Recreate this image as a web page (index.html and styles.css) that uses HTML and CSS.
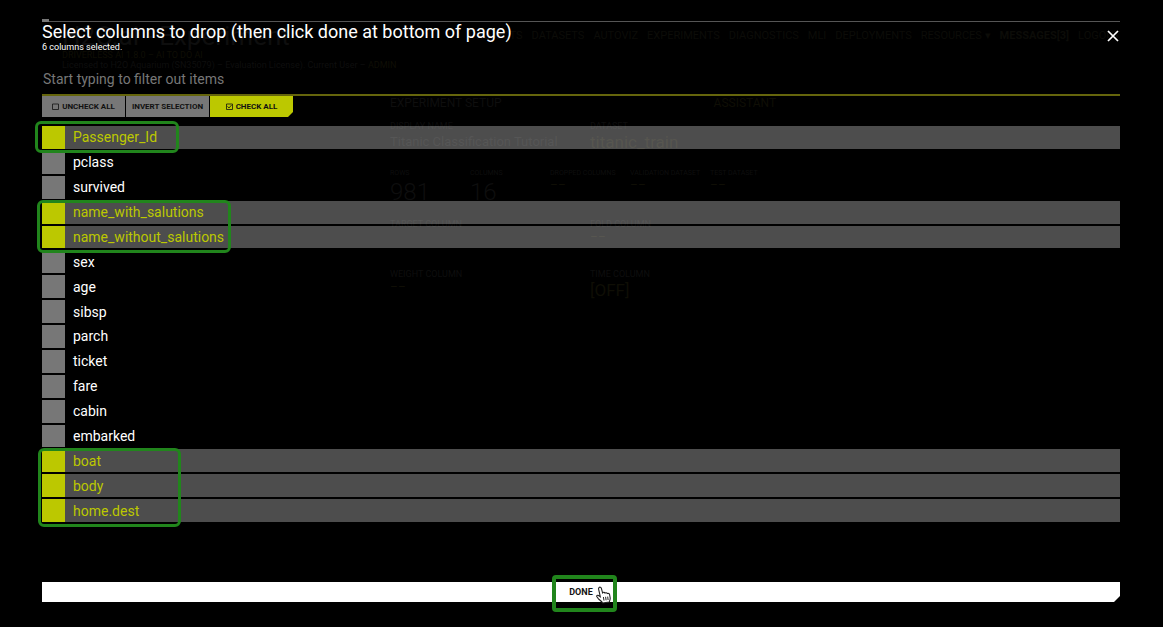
FILE: index.html
```html
<!DOCTYPE html>
<html lang="en">
<head>
<meta charset="utf-8">
<title>Select columns to drop</title>
<link rel="stylesheet" href="styles.css">
</head>
<body>
<div class="page" aria-hidden="true">
  <header class="top">
    <div class="brand">
      <div class="brand-name">H2O.ai - Experiment</div>
      <div class="accent small">DRIVERLESS AI 1.8.0 – AI TO DO AI</div>
      <div class="small">Licensed to H2O Aquarium (SN35079) – Evaluation License). Current User – <span class="accent">ADMIN</span></div>
    </div>
    <nav class="nav">
      <span>PROJECTS</span><span>DATASETS</span><span>AUTOVIZ</span><span>EXPERIMENTS</span><span>DIAGNOSTICS</span><span>MLI</span><span>DEPLOYMENTS</span><span>RESOURCES ▾</span><b>MESSAGES[3]</b><span>LOGOUT</span>
    </nav>
  </header>
  <section class="setup">
    <div class="setup-head"><span>EXPERIMENT SETUP</span><span class="accent">ASSISTANT</span></div>
    <div class="pair names">
      <div><div class="cap">DISPLAY NAME</div><div class="value">Titanic Classification Tutorial</div></div>
      <div><div class="cap">DATASET</div><div class="value wide accent">titanic_train</div></div>
    </div>
    <div class="stats">
      <div><div class="tiny">ROWS</div><div class="big">981</div></div>
      <div><div class="tiny">COLUMNS</div><div class="big">16</div></div>
      <div><div class="tiny">DROPPED COLUMNS</div><div class="accent">––</div></div>
      <div><div class="tiny">VALIDATION DATASET</div><div class="accent">––</div></div>
      <div><div class="tiny">TEST DATASET</div><div class="accent">––</div></div>
    </div>
    <div class="pair target">
      <div class="cap">TARGET COLUMN</div>
      <div><div class="cap">FOLD COLUMN</div><div class="accent">––</div></div>
    </div>
    <div class="pair">
      <div><div class="cap">WEIGHT COLUMN</div><div class="accent">––</div></div>
      <div><div class="cap">TIME COLUMN</div><div class="value wide accent">[OFF]</div></div>
    </div>
  </section>
</div>

<main class="dialog" role="dialog" aria-labelledby="dialog-title">
  <header class="head">
    <h1 class="title" id="dialog-title">Select columns to drop (then click done at bottom of page)</h1>
    <p class="count">6 columns selected.</p>
    <button class="close" type="button" aria-label="Close">
      <svg viewBox="0 0 12 12" width="12" height="12"><path d="M1 1L11 11M11 1L1 11" stroke="currentColor" stroke-width="1.7" fill="none"/></svg>
    </button>
  </header>
  <input class="filter" type="text" placeholder="Start typing to filter out items" aria-label="Filter items">
  <div class="tools">
    <button class="tool" type="button"><svg viewBox="0 0 7 7" width="7" height="7"><path d="M.5 1H6.5V6.5H.5Z" fill="none" stroke="currentColor" stroke-width=".8"/></svg>UNCHECK ALL</button>
    <button class="tool" type="button">INVERT SELECTION</button>
    <button class="tool tool-main" type="button"><svg viewBox="0 0 7 7" width="7" height="7"><path d="M.5 1H6.5V6.5H.5ZM1.5 3.4L3 5L5.6 2" fill="none" stroke="currentColor" stroke-width=".8"/></svg>CHECK ALL</button>
  </div>
  <div class="list">
    <label class="row"><input type="checkbox" checked><span>Passenger_Id</span></label>
    <label class="row"><input type="checkbox"><span>pclass</span></label>
    <label class="row"><input type="checkbox"><span>survived</span></label>
    <label class="row"><input type="checkbox" checked><span>name_with_salutions</span></label>
    <label class="row"><input type="checkbox" checked><span>name_without_salutions</span></label>
    <label class="row"><input type="checkbox"><span>sex</span></label>
    <label class="row"><input type="checkbox"><span>age</span></label>
    <label class="row"><input type="checkbox"><span>sibsp</span></label>
    <label class="row"><input type="checkbox"><span>parch</span></label>
    <label class="row"><input type="checkbox"><span>ticket</span></label>
    <label class="row"><input type="checkbox"><span>fare</span></label>
    <label class="row"><input type="checkbox"><span>cabin</span></label>
    <label class="row"><input type="checkbox"><span>embarked</span></label>
    <label class="row"><input type="checkbox" checked><span>boat</span></label>
    <label class="row"><input type="checkbox" checked><span>body</span></label>
    <label class="row"><input type="checkbox" checked><span>home.dest</span></label>
    <div class="mark mark-id"></div>
    <div class="mark mark-names"></div>
    <div class="mark mark-last"></div>
  </div>
  <div class="foot">
    <button class="done" type="button">DONE</button>
    <div class="mark mark-done">
      <svg class="hand" viewBox="0 0 16 18" width="16" height="18"><path d="M3 1.6C3.8.8 5 1.2 5.3 2.2L6.6 6.8C7.3 6 8.6 6.2 9 7.1C9.8 6.4 11 6.8 11.3 7.6C12.3 7.1 13.4 7.7 13.6 8.7L14.2 12C14.4 13.4 13.6 14.6 13.3 16L6.6 17C5.8 15.4 3.8 14.2 2.5 12.8L.9 10.8C.3 9.8 1.5 8.9 2.5 9.5L4.3 10.7L2.6 3.2C2.5 2.6 2.6 2 3 1.6Z" fill="#fff" stroke="#222" stroke-width="1.1"/><path d="M7.4 11L8 14.6M9.6 10.8L10.1 14.3M11.7 10.6L12.1 14" stroke="#222" fill="none"/></svg>
    </div>
  </div>
</main>
</body>
</html>
```
FILE: styles.css
```css
* { box-sizing: border-box; }
body {
  margin: 0;
  background: #000;
  color: #fff;
  font-family: Roboto, "Liberation Sans", sans-serif;
}
button { border: 0; padding: 0; font: inherit; cursor: pointer; }

/* Page dimmed behind the dialog */
.page {
  position: absolute;
  inset: 0;
  overflow: hidden;
  padding: 22px 43px 0 62px;
  color: #0e0e0e;
  white-space: nowrap;
}
.accent { color: #0f0e05; }
.top { display: flex; justify-content: space-between; height: 70px; }
.brand { width: 400px; }
.brand-name { font-size: 26px; line-height: 28px; }
.small { font-size: 9px; line-height: 10px; }
.nav { display: flex; gap: 9px; font-size: 11px; line-height: 28px; color: #0c0c08; }
.setup { padding-left: 328px; font-size: 12px; }
.setup-head { display: flex; gap: 212px; line-height: 22px; }
.pair { display: grid; grid-template-columns: 200px 1fr; height: 45px; }
.cap { font-size: 9px; line-height: 12px; }
.value { font-size: 13px; line-height: 20px; }
.wide { font-size: 17px; }
.names { padding-top: 6px; height: 54px; }
.stats { display: grid; grid-template-columns: repeat(5, 80px); height: 50px; }
.tiny { font-size: 7px; line-height: 10px; }
.big { font-size: 24px; line-height: 28px; font-weight: 300; }
.target { height: 50px; }

/* Dialog */
.dialog {
  position: relative;
  display: flex;
  flex-direction: column;
  min-height: 100vh;
  padding: 21px 43px 25px 42px;
}
.head { position: relative; border-top: 1px solid #555; }
.head::before {
  content: "";
  position: absolute;
  left: 0;
  top: -3px;
  width: 7px;
  height: 3px;
  background: #777;
}
.title { margin: 0; font-size: 18px; line-height: 20px; font-weight: 400; }
.count { margin: 0; font-size: 9px; line-height: 10px; }
.close {
  position: absolute;
  right: 0;
  top: 7px;
  width: 13px;
  height: 13px;
  color: #fff;
  background: none;
}
.close svg { display: block; }
.filter {
  height: 32px;
  margin-top: 12px;
  padding: 0 1px;
  border: 0;
  border-bottom: 2px solid #65650c;
  background: none;
  color: #fff;
  font: 14px Roboto, sans-serif;
  outline: 0;
}
.filter::placeholder { color: #777; opacity: 1; }
.tools { display: flex; gap: 1px; }
.tool {
  display: flex;
  align-items: center;
  justify-content: center;
  gap: 3px;
  width: 83px;
  height: 21px;
  background: #777;
  color: #111;
  font-size: 8px;
  font-weight: 700;
  white-space: nowrap;
}
.tool-main {
  background: #bcc800;
  clip-path: polygon(0 0, 100% 0, 100% calc(100% - 5px), calc(100% - 5px) 100%, 0 100%);
}
.list {
  position: relative;
  flex: 1;
  display: grid;
  grid-auto-rows: 1fr;
  gap: 2px;
  margin: 9px 0 60px;
}
.row {
  display: flex;
  align-items: center;
  gap: 8px;
  font-size: 14px;
  line-height: 20px;
}
.row:has(:checked) { background: rgba(255, 255, 255, 0.3); color: #bcc800; }
.row input {
  appearance: none;
  align-self: stretch;
  width: 23px;
  margin: 0;
  background: #777;
}
.row input:checked { background: #bcc800; }

/* Highlight frames */
.mark {
  position: absolute;
  border: 3px solid #21851c;
  border-radius: 6px;
  pointer-events: none;
}
.mark-id { left: -7px; top: -5px; width: 144px; height: 32px; }
.mark-names { left: -5px; top: 74px; width: 194px; height: 53px; }
.mark-last { left: -4px; bottom: -5px; width: 143px; height: 79px; }

.foot { position: relative; display: flex; }
.done {
  flex: 1;
  height: 20px;
  background: #fff;
  color: #111;
  font-size: 9px;
  font-weight: 700;
  clip-path: polygon(0 0, 100% 0, 100% calc(100% - 6px), calc(100% - 6px) 100%, 0 100%);
}
.mark-done {
  left: calc(50% - 29px);
  top: -7px;
  width: 65px;
  height: 37px;
  border-width: 4px;
  border-radius: 4px;
}
.hand { position: absolute; right: 1px; top: 7px; }
```
